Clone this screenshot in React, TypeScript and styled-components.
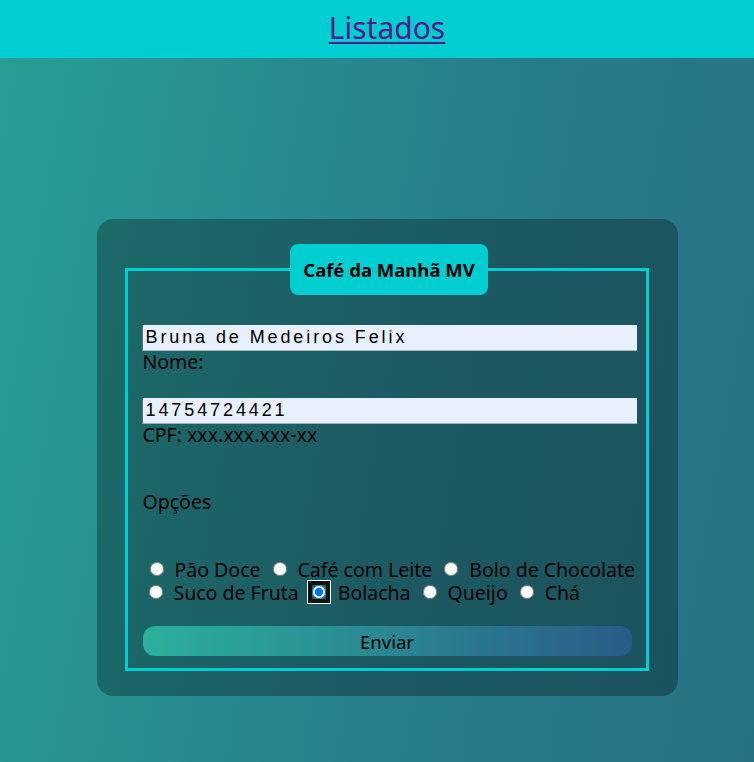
import React from "react";
import styled, { createGlobalStyle } from "styled-components";

const GlobalStyle = createGlobalStyle`
  html, body {
    margin: 0;
    padding: 0;
  }
  body {
    font-family: "Noto Sans", "DejaVu Sans", sans-serif;
    min-height: 100vh;
    background: linear-gradient(100deg, #27a096 0%, #287f8c 55%, #267282 100%);
    background-attachment: fixed;
    color: #000;
  }
  * { box-sizing: border-box; }
`;

const Page = styled.div`
  min-height: 100vh;
  display: flex;
  flex-direction: column;
`;

const Header = styled.header`
  height: 58px;
  background: #00ced1;
  display: flex;
  align-items: center;
  justify-content: center;
  padding-left: 20px;
`;

const NavLink = styled.a`
  font-size: 30px;
  line-height: 36px;
  color: #551a8b;
  text-decoration: underline;
  text-underline-offset: 3px;
  text-decoration-thickness: 2px;
  margin-top: -2px;
`;

const Main = styled.main`
  flex: 1;
  display: flex;
  justify-content: center;
  align-items: flex-start;
  padding: 161px 0 0 20px;
`;

const Card = styled.section`
  width: 581px;
  padding: 25px 29px 25px 28px;
  border-radius: 16px;
  background: rgba(0, 0, 0, 0.29);
`;

const FieldSet = styled.fieldset`
  margin: 0;
  padding: 30px 9px 12px 14px;
  border: 3px solid #00ced1;
  min-width: 0;
`;

const Legend = styled.legend`
  margin: 0 auto;
  padding: 13px 13px;
  background: #00ced1;
  border-radius: 8px;
  font-size: 18.5px;
  line-height: 25px;
  font-weight: 700;
  color: #000;
`;

const Field = styled.div<{ $gap?: number }>`
  display: flex;
  flex-direction: column;
  margin-bottom: ${(p) => p.$gap ?? 0}px;
`;

const TextInput = styled.input`
  display: block;
  width: 100%;
  height: 26px;
  margin: 0;
  padding: 0 0 0 3px;
  border: none;
  border-left: 1px solid #5f6f74;
  border-bottom: 1px solid #a9b4b8;
  background: #e8f0fe;
  font-family: "Liberation Sans", Arial, sans-serif;
  font-size: 18px;
  letter-spacing: 2.9px;
  color: #000;
  outline: none;
`;

const FieldLabel = styled.label`
  display: block;
  font-size: 19.5px;
  line-height: 22px;
  padding-left: 1px;
`;

const SectionTitle = styled.p`
  margin: 0 0 45px;
  padding-left: 1px;
  font-size: 19.5px;
  line-height: 22px;
`;

const OptionRow = styled.div<{ $indent: number }>`
  display: flex;
  align-items: center;
  gap: 12px;
  height: 23px;
  padding-left: ${(p) => p.$indent}px;
`;

const Option = styled.label`
  display: inline-flex;
  align-items: center;
  font-size: 19.5px;
  line-height: 22px;
  white-space: nowrap;
`;

const Radio = styled.input<{ $focused?: boolean }>`
  width: 14px;
  height: 14px;
  margin: -2px 11px 0 0;
  flex: none;
  ${(p) =>
    p.$focused
      ? `
    border-radius: 4px;
    outline: 4px solid #111;
    outline-offset: 0;
    box-shadow: 0 0 0 5px #fff;
    margin-left: 1px;
    margin-right: 12px;
  `
      : ""}
`;

const Options = styled.div`
  margin-bottom: 22px;
`;

const SubmitButton = styled.button`
  display: block;
  width: 489px;
  height: 30px;
  margin: 0 0 0 1px;
  border: none;
  border-radius: 12px;
  background: linear-gradient(90deg, #2bb09a 0%, #2a8b94 45%, #2a5b88 100%);
  font-family: "Noto Sans", "DejaVu Sans", sans-serif;
  font-size: 18.5px;
  color: #000;
  cursor: pointer;
`;

type Opt = { label: string; checked?: boolean };

const row1: Opt[] = [
  { label: "Pão Doce" },
  { label: "Café com Leite" },
  { label: "Bolo de Chocolate" },
];
const row2: Opt[] = [
  { label: "Suco de Fruta" },
  { label: "Bolacha", checked: true },
  { label: "Queijo" },
  { label: "Chá" },
];

export default function App() {
  const renderRow = (opts: Opt[]) =>
    opts.map((o) => (
      <Option key={o.label}>
        <Radio
          type="radio"
          name="opcao"
          value={o.label}
          defaultChecked={o.checked}
          $focused={o.checked}
        />
        {o.label}
      </Option>
    ));

  return (
    <>
      <GlobalStyle />
      <Page>
        <Header>
          <NavLink href="#listados">Listados</NavLink>
        </Header>
        <Main>
          <Card>
            <form onSubmit={(e) => e.preventDefault()}>
              <FieldSet>
                <Legend>Café da Manhã MV</Legend>
                <Field $gap={25}>
                  <TextInput id="nome" defaultValue="Bruna de Medeiros Felix" />
                  <FieldLabel htmlFor="nome">Nome:</FieldLabel>
                </Field>
                <Field $gap={45}>
                  <TextInput id="cpf" defaultValue="14754724421" />
                  <FieldLabel htmlFor="cpf">CPF: xxx.xxx.xxx-xx</FieldLabel>
                </Field>
                <SectionTitle>Opções</SectionTitle>
                <Options>
                  <OptionRow $indent={8}>{renderRow(row1)}</OptionRow>
                  <OptionRow $indent={7}>{renderRow(row2)}</OptionRow>
                </Options>
                <SubmitButton type="submit">Enviar</SubmitButton>
              </FieldSet>
            </form>
          </Card>
        </Main>
      </Page>
    </>
  );
}
